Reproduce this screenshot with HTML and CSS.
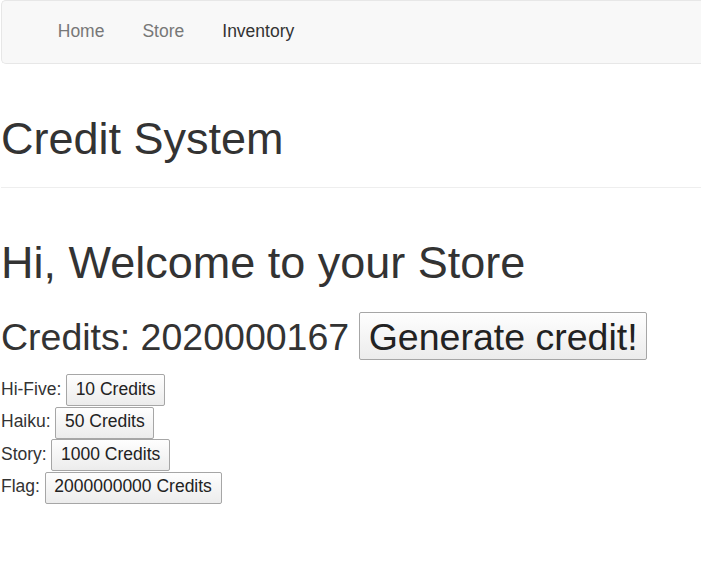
FILE: index.html
```html
<!DOCTYPE html>
<html lang="en">
<head>
<meta charset="utf-8">
<title>Credit System</title>
<link rel="stylesheet" href="styles.css">
</head>
<body>
<nav class="navbar">
  <ul class="nav">
    <li><a class="nav-link" href="#">Home</a></li>
    <li><a class="nav-link" href="#">Store</a></li>
    <li><a class="nav-link nav-link-active" href="#">Inventory</a></li>
  </ul>
</nav>
<main class="content">
  <header class="page-header">
    <h1 class="title">Credit System</h1>
  </header>
  <h1 class="welcome">Hi, Welcome to your Store</h1>
  <h2 class="credits">
    <span class="credits-label">Credits: 2020000167</span>
    <button class="btn btn-large" type="button">Generate credit!</button>
  </h2>
  <div class="items">
    <div class="item"><span class="item-label">Hi-Five:</span><button class="btn btn-small" type="button">10 Credits</button></div>
    <div class="item"><span class="item-label">Haiku:</span><button class="btn btn-small" type="button">50 Credits</button></div>
    <div class="item"><span class="item-label">Story:</span><button class="btn btn-small" type="button">1000 Credits</button></div>
    <div class="item"><span class="item-label">Flag:</span><button class="btn btn-small" type="button">2000000000 Credits</button></div>
  </div>
</main>
</body>
</html>
```
FILE: styles.css
```css
html, body {
  margin: 0;
  padding: 0;
  background: #fff;
}
body {
  font-family: "Liberation Sans", Arial, sans-serif;
  font-size: 17.5px;
  line-height: 25px;
  color: #333;
  overflow: hidden;
}
.navbar {
  margin-left: 1px;
  height: 62px;
  background: #f8f8f8;
  border: 1px solid #e7e7e7;
  border-right: none;
  border-radius: 5px 0 0 5px;
  box-sizing: content-box;
}
.nav {
  list-style: none;
  margin: 0;
  padding: 0 0 0 37px;
  display: flex;
}
.nav-link {
  display: block;
  padding: 17.5px 19.25px 19.5px 18.75px;
  line-height: 25px;
  color: #777;
  text-decoration: none;
}
.nav-link-active {
  color: #333;
}
.content {
  margin-left: 1px;
}
.page-header {
  margin-top: 50px;
  padding-bottom: 11.25px;
  border-bottom: 1px solid #eee;
}
.title, .welcome {
  font-size: 45px;
  font-weight: 500;
  line-height: 49.5px;
  margin: 0;
}
.title {
  margin-bottom: 12.5px;
}
.welcome {
  margin-top: 49.5px;
}
.credits {
  display: flex;
  align-items: baseline;
  gap: 10px;
  margin: 25px 0 0;
  font-size: 37.5px;
  font-weight: 500;
  line-height: 41.25px;
}
.btn {
  font-family: inherit;
  color: #222;
  background: linear-gradient(#fefefe, #ececec);
  border: 1px solid #a6a6a6;
  border-radius: 2px;
  margin: 0;
  box-sizing: border-box;
}
.btn-large {
  font-size: 37.5px;
  line-height: 43px;
  padding: 2.5px 8.5px 0.5px;
  height: 48px;
}
.items {
  margin-top: 14px;
  display: flex;
  flex-direction: column;
  gap: 0.5px;
}
.item {
  display: flex;
  align-items: baseline;
  gap: 4.6px;
  height: 32px;
}
.btn-small {
  font-size: 17.5px;
  line-height: 25px;
  padding: 1.5px 8.75px 3.5px;
  height: 32px;
}
```
